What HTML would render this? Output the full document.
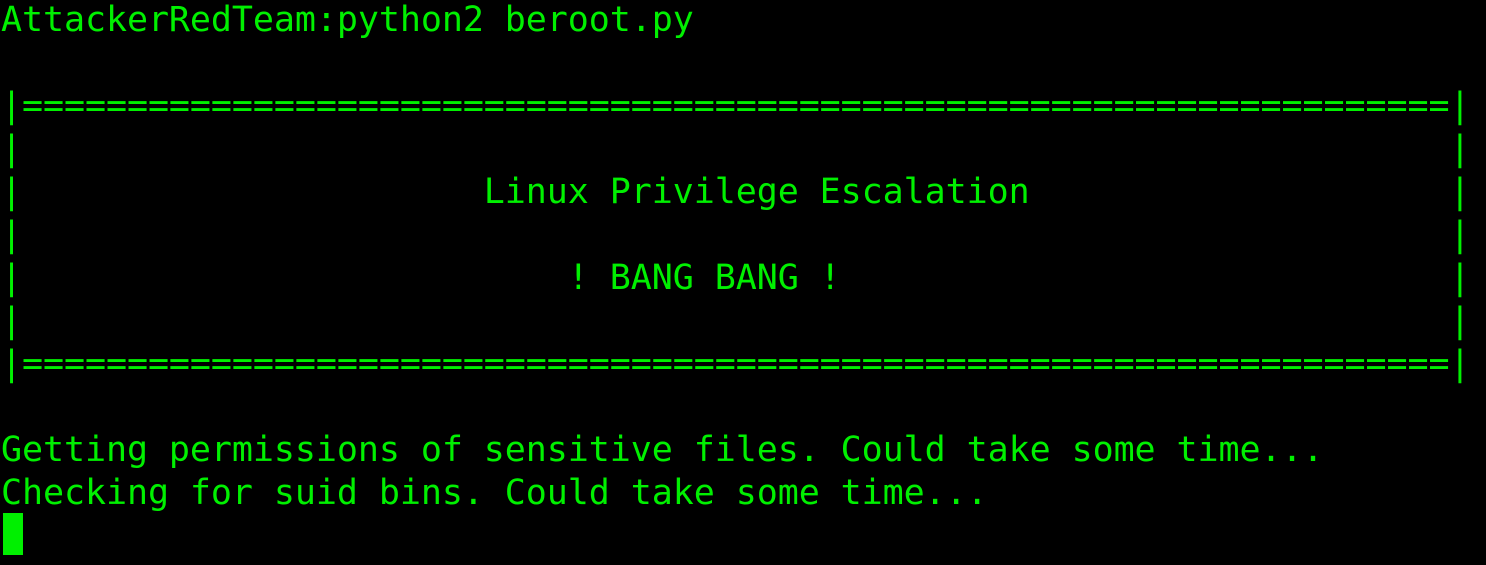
<!DOCTYPE html>
<html><head><meta charset="utf-8"><style>
html,body{margin:0;padding:0;background:#000;width:1486px;height:565px;overflow:hidden}
pre{margin:0;position:absolute;left:1px;top:-1px;font-family:"DejaVu Sans Mono","Liberation Mono",monospace;font-size:35px;letter-spacing:-0.08px;line-height:43px;color:#00f000}
.cur{position:absolute;left:3px;top:513px;width:20px;height:42px;background:#00f000}
</style></head><body>
<pre>AttackerRedTeam:python2 beroot.py

|====================================================================|
|                                                                    |
|                      Linux Privilege Escalation                    |
|                                                                    |
|                          ! BANG BANG !                             |
|                                                                    |
|====================================================================|

Getting permissions of sensitive files. Could take some time...
Checking for suid bins. Could take some time...
</pre>
<div class="cur"></div>
</body></html>
